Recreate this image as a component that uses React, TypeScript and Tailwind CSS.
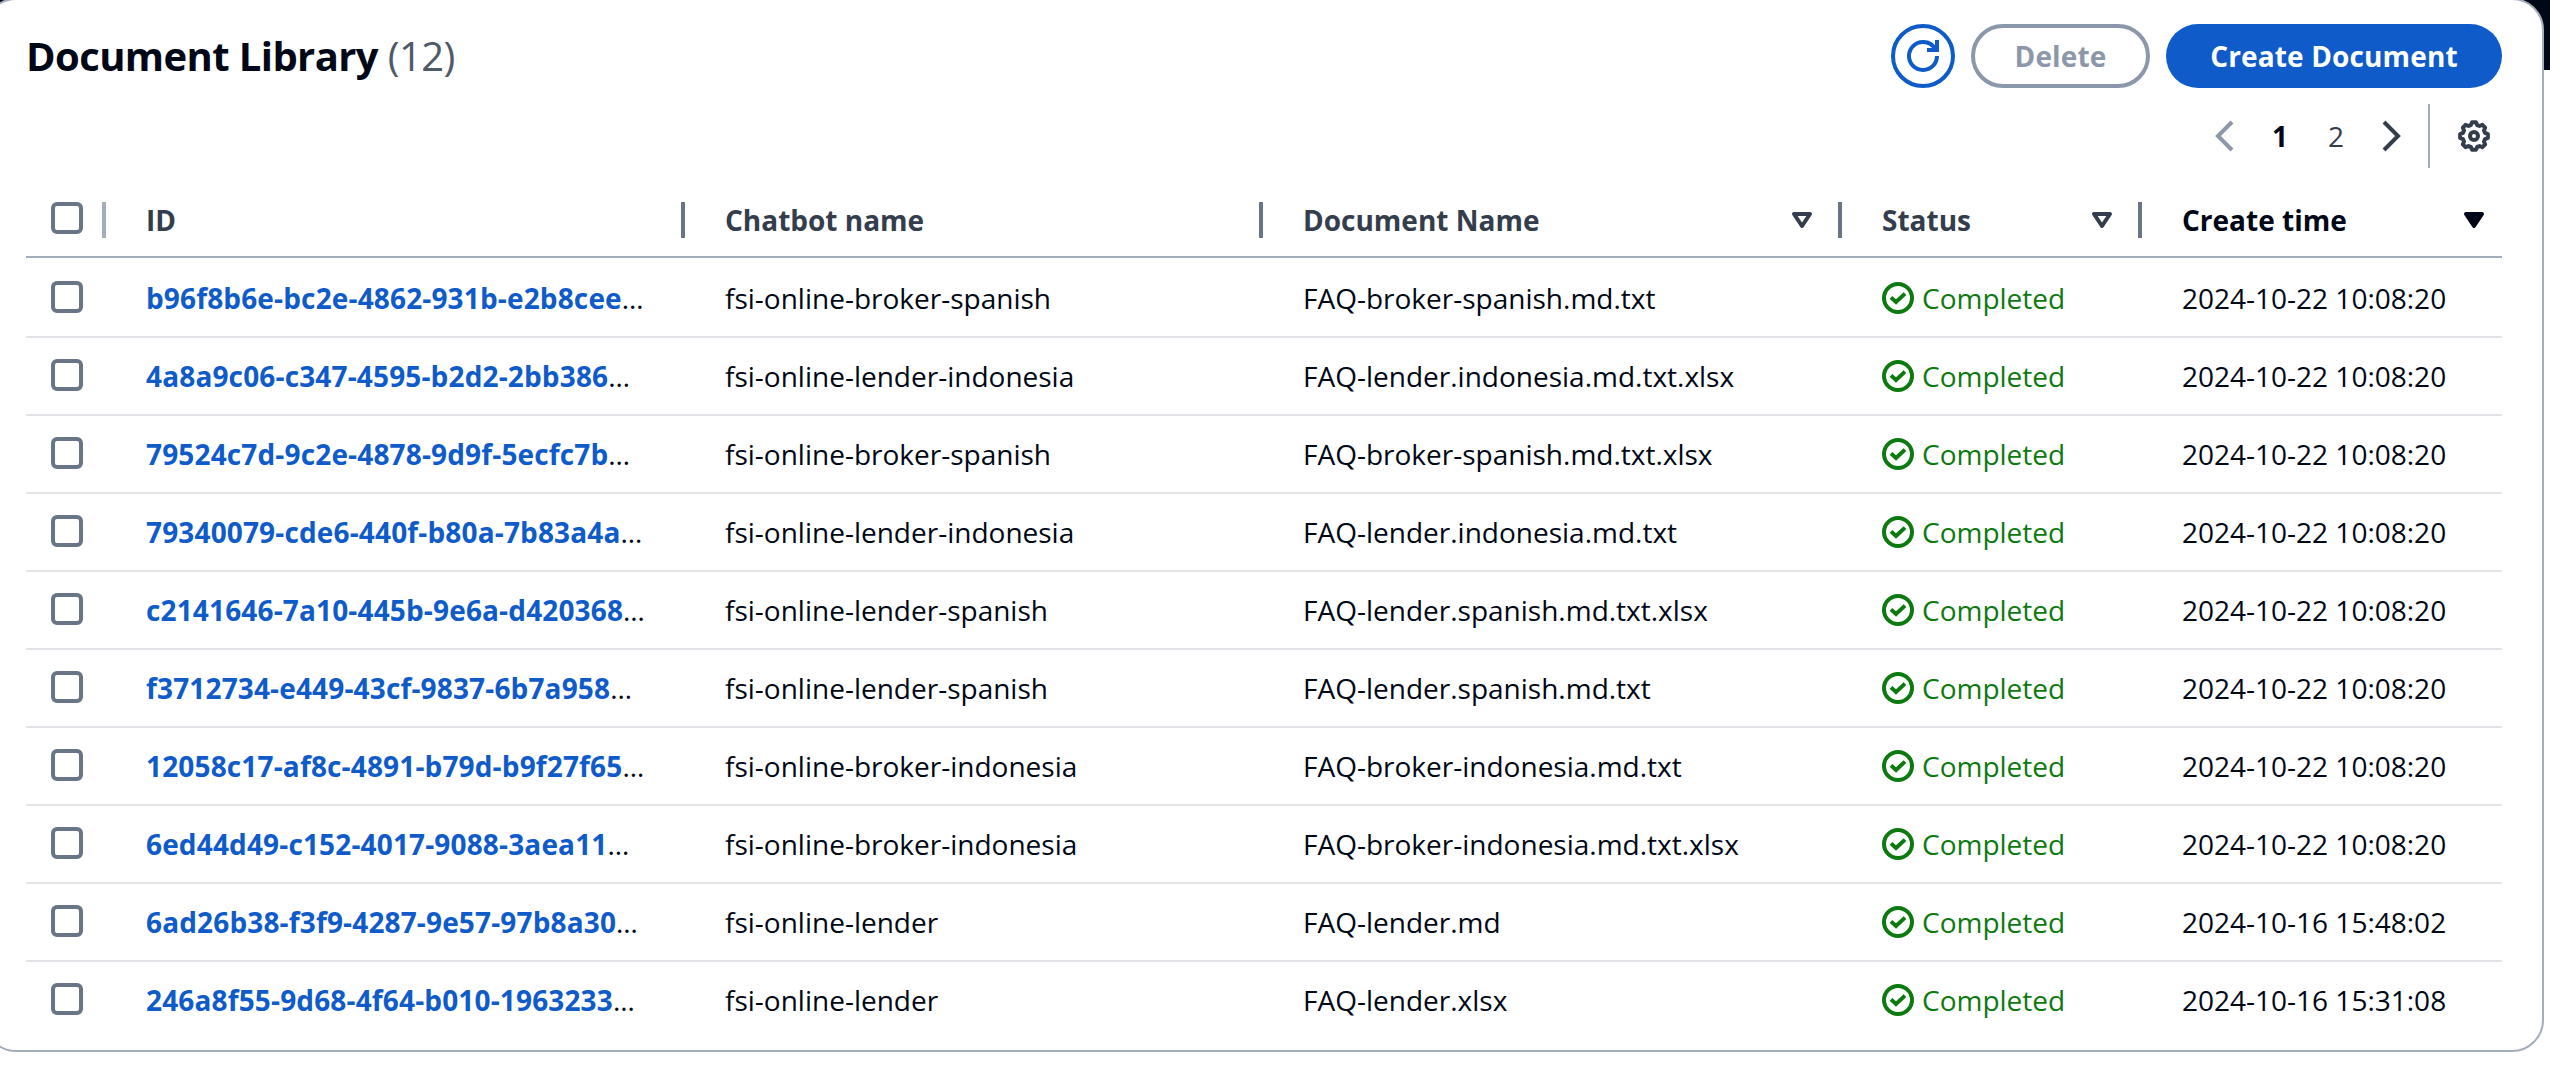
import React from "react";

const rows = [
  ["b96f8b6e-bc2e-4862-931b-e2b8cee", "fsi-online-broker-spanish", "FAQ-broker-spanish.md.txt", "2024-10-22 10:08:20"],
  ["4a8a9c06-c347-4595-b2d2-2bb386", "fsi-online-lender-indonesia", "FAQ-lender.indonesia.md.txt.xlsx", "2024-10-22 10:08:20"],
  ["79524c7d-9c2e-4878-9d9f-5ecfc7b", "fsi-online-broker-spanish", "FAQ-broker-spanish.md.txt.xlsx", "2024-10-22 10:08:20"],
  ["79340079-cde6-440f-b80a-7b83a4a", "fsi-online-lender-indonesia", "FAQ-lender.indonesia.md.txt", "2024-10-22 10:08:20"],
  ["c2141646-7a10-445b-9e6a-d420368", "fsi-online-lender-spanish", "FAQ-lender.spanish.md.txt.xlsx", "2024-10-22 10:08:20"],
  ["f3712734-e449-43cf-9837-6b7a958", "fsi-online-lender-spanish", "FAQ-lender.spanish.md.txt", "2024-10-22 10:08:20"],
  ["12058c17-af8c-4891-b79d-b9f27f65", "fsi-online-broker-indonesia", "FAQ-broker-indonesia.md.txt", "2024-10-22 10:08:20"],
  ["6ed44d49-c152-4017-9088-3aea11", "fsi-online-broker-indonesia", "FAQ-broker-indonesia.md.txt.xlsx", "2024-10-22 10:08:20"],
  ["6ad26b38-f3f9-4287-9e57-97b8a30", "fsi-online-lender", "FAQ-lender.md", "2024-10-16 15:48:02"],
  ["246a8f55-9d68-4f64-b010-1963233", "fsi-online-lender", "FAQ-lender.xlsx", "2024-10-16 15:31:08"],
];

const GRID = "grid grid-cols-[80px_579px_578px_579px_300px_360px]";

// Eight-toothed gear outline centred on (8, 8).
const gearPoints = Array.from({ length: 8 }, (_, i) =>
  [[-8, 7], [8, 7], [16, 5.7], [29, 5.7]].map(([deg, r]) => {
    const a = ((i * 45 + deg) * Math.PI) / 180;
    return `${(8 + r * Math.sin(a)).toFixed(2)},${(8 - r * Math.cos(a)).toFixed(2)}`;
  }).join(" ")
).join(" ");

function Checkbox() {
  return <span className="block size-8 rounded-[6px] border-4 border-[#687586] bg-white" />;
}

function Caret({ filled = false }: { filled?: boolean }) {
  return (
    <svg viewBox="0 0 16 16" className="size-8 shrink-0" fill={filled ? "currentColor" : "none"} stroke="currentColor" strokeWidth="2" strokeLinejoin="round">
      <path d="M4 5h8l-4 6z" />
    </svg>
  );
}

function Header({ label, caret, active, last }: { label: string; caret?: boolean; active?: boolean; last?: boolean }) {
  return (
    <div className={`flex items-start justify-between pl-10 ${active ? "text-[#000716]" : "text-[#333d4c]"}`}>
      <span className="mt-[6px] leading-10">{label}</span>
      <div className="flex">
        {caret && <span className={last ? "mr-3 mt-[10px]" : "mr-5 mt-[10px]"}><Caret filled={active} /></span>}
        {!last && <span className="mt-2 h-9 w-1 bg-[#687586]" />}
      </div>
    </div>
  );
}

export default function App() {
  return (
    <div className="h-[1086px] w-[2550px] overflow-hidden bg-white font-['Open_Sans',sans-serif] text-[28px] text-[#000716]">
      <div className="h-[70px] bg-[#000716]" />
      <main className="-ml-4 -mt-[72px] h-[1054px] w-[2560px] rounded-[32px] border-2 border-[#a4adbc] bg-white px-10">
        <div className="flex h-[88px] items-end justify-between">
          <h1 className="mb-[8px] whitespace-pre text-[40px] font-bold leading-[48px] tracking-[-0.6px]">
            Document Library <span className="font-normal text-[#4d5a6a]">(12)</span>
          </h1>
          <div className="flex gap-4 font-bold tracking-[0.14px]">
            <button className="flex size-16 items-center justify-center rounded-full border-4 border-[#0f5bca] text-[#0f5bca]">
              <svg viewBox="0 0 16 16" className="size-8 shrink-0" fill="none" stroke="currentColor" strokeWidth="2">
                <path d="M10 5h5V0M15 8a6.957 6.957 0 0 1-7 7 6.957 6.957 0 0 1-7-7 6.957 6.957 0 0 1 7-7 6.870 6.870 0 0 1 6.300 4" />
              </svg>
            </button>
            <button className="h-16 w-[179px] rounded-[32px] border-4 border-[#8c98aa] text-[#8c98aa]">Delete</button>
            <button className="h-16 w-[336px] rounded-[32px] bg-[#0f5bca] text-white">Create Document</button>
          </div>
        </div>
        <div className="mt-4 flex h-16 items-center justify-end text-[#333d4c]">
          <svg viewBox="0 0 16 16" className="size-8 text-[#8c98aa]" fill="none" stroke="currentColor" strokeWidth="2">
            <path d="m11 1-7 7 7 7" />
          </svg>
          <span className="ml-[26px] w-6 text-center font-bold text-[#000716]">1</span>
          <span className="ml-8 w-6 text-center">2</span>
          <svg viewBox="0 0 16 16" className="ml-[26px] size-8" fill="none" stroke="currentColor" strokeWidth="2">
            <path d="m5 1 7 7-7 7" />
          </svg>
          <span className="ml-[22px] h-16 w-0.5 bg-[#a4adbc]" />
          <svg viewBox="0 0 16 16" className="ml-7 mr-3 size-8" fill="none" stroke="currentColor" strokeWidth="2" strokeLinejoin="round">
            <polygon points={gearPoints} />
            <circle cx="8" cy="8" r="2" />
          </svg>
        </div>
        <div className={`${GRID} mt-[26px] h-16 border-b-2 border-[#a4adbc] font-bold`}>
          <div className="flex justify-between pl-[25px] pt-2">
            <Checkbox />
            <span className="h-9 w-1 bg-[#a4adbc]" />
          </div>
          <Header label="ID" />
          <Header label="Chatbot name" />
          <Header label="Document Name" caret />
          <Header label="Status" caret />
          <Header label="Create time" caret active last />
        </div>
        {rows.map(([id, bot, name, time], i) => (
          <div key={id} className={`${GRID} items-start whitespace-nowrap leading-10 ${i === 0 ? "h-[80px] pt-5" : "h-[78px] pt-[18px]"} ${i < 9 ? "border-b-2 border-[#e3e4e9]" : ""}`}>
            <div className="pl-[25px] pt-[3px]"><Checkbox /></div>
            <div className="pl-10"><a className="font-bold tracking-[0.15px] text-[#0f5bca]">{id}</a>…</div>
            <div className="pl-10">{bot}</div>
            <div className="pl-10">{name}</div>
            <div className="flex items-center gap-2 pl-10 text-[#0d7a10]">
              <svg viewBox="0 0 16 16" className="size-8 shrink-0" fill="none" stroke="currentColor" strokeWidth="2">
                <circle cx="8" cy="8" r="7" />
                <path d="m4.500 7.700 2.500 2.300 4.500-4.200" />
              </svg>
              Completed
            </div>
            <div className="pl-10">{time}</div>
          </div>
        ))}
      </main>
    </div>
  );
}
